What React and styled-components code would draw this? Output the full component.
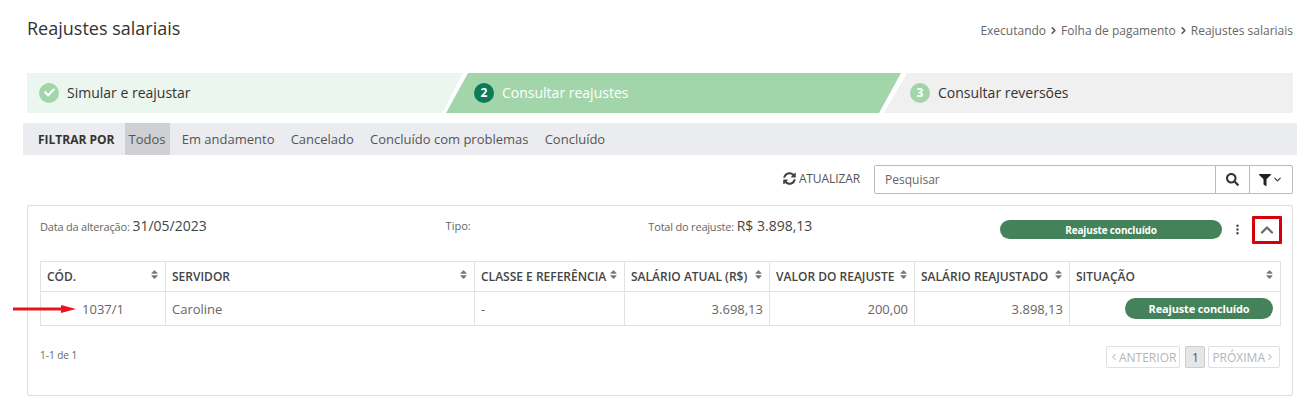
import React from "react";
import styled, { createGlobalStyle } from "styled-components";
import { FaCheck, FaFilter, FaSearch, FaSort, FaSyncAlt } from "react-icons/fa";
import { ChevronDown, ChevronLeft, ChevronRight, ChevronUp, EllipsisVertical } from "lucide-react";

const columns = [
  { label: "CÓD.", width: 125 },
  { label: "SERVIDOR", width: 309 },
  { label: "CLASSE E REFERÊNCIA", width: 150 },
  { label: "SALÁRIO ATUAL (R$)", width: 145 },
  { label: "VALOR DO REAJUSTE", width: 145 },
  { label: "SALÁRIO REAJUSTADO", width: 155 },
  { label: "SITUAÇÃO", width: 211 },
];

const filters = ["Todos", "Em andamento", "Cancelado", "Concluído com problemas", "Concluído"];

const App = () => {
  return (
    <Page>
      <GlobalStyle />
      <Header>
        <Title>Reajustes salariais</Title>
        <Breadcrumb>
          Executando
          <Sep size={11} strokeWidth={3.5} />
          Folha de pagamento
          <Sep size={11} strokeWidth={3.5} />
          Reajustes salariais
        </Breadcrumb>
      </Header>

      <Stepper>
        <StepFirst>
          <StepDone>
            <FaCheck size={11} />
          </StepDone>
          <StepLabel>Simular e reajustar</StepLabel>
        </StepFirst>
        <StepActive>
          <StepNumber $active>2</StepNumber>
          <StepLabel>Consultar reajustes</StepLabel>
        </StepActive>
        <StepLast>
          <StepNumber>3</StepNumber>
          <StepLabel>Consultar reversões</StepLabel>
        </StepLast>
      </Stepper>

      <FilterBar>
        <FilterLabel>FILTRAR POR</FilterLabel>
        {filters.map((f, i) => (
          <FilterItem key={f} $selected={i === 0}>
            {f}
          </FilterItem>
        ))}
      </FilterBar>

      <SearchRow>
        <RefreshButton>
          <FaSyncAlt size={13} color="#444" />
          ATUALIZAR
        </RefreshButton>
        <SearchGroup>
          <SearchInput placeholder="Pesquisar" />
          <SearchAddon>
            <FaSearch size={13} color="#333" />
          </SearchAddon>
          <SearchAddon $wide>
            <FaFilter size={12} color="#222" />
            <ChevronDown size={11} color="#333" strokeWidth={2.5} />
          </SearchAddon>
        </SearchGroup>
      </SearchRow>

      <Card>
        <CardHeader>
          <InfoDate>
            <span>Data da alteração:</span> <strong>31/05/2023</strong>
          </InfoDate>
          <InfoType>Tipo:</InfoType>
          <InfoTotal>
            <span>Total do reajuste:</span> <strong>R$ 3.898,13</strong>
          </InfoTotal>
          <HeaderActions>
            <StatusWide>Reajuste concluído</StatusWide>
            <MoreIcon size={13} color="#444" strokeWidth={2.5} />
            <CollapseButton>
              <ChevronUp size={20} color="#6b6b6b" strokeWidth={2.75} />
            </CollapseButton>
          </HeaderActions>
        </CardHeader>

        <Table>
          <colgroup>
            {columns.map((c) => (
              <col key={c.label} style={{ width: c.width }} />
            ))}
          </colgroup>
          <thead>
            <tr>
              {columns.map((c) => (
                <Th key={c.label}>
                  <ThInner>
                    {c.label}
                    <SortIcon size={11} />
                  </ThInner>
                </Th>
              ))}
            </tr>
          </thead>
          <tbody>
            <tr>
              <Td $center>
                <RowArrow width="64" height="10" viewBox="0 0 64 10">
                  <path d="M0 3.5h48V1l15 4-15 4V6.5H0z" fill="#e8141c" />
                </RowArrow>
                1037/1
              </Td>
              <Td>Caroline</Td>
              <Td>-</Td>
              <Td $right>3.698,13</Td>
              <Td $right>200,00</Td>
              <Td $right>3.898,13</Td>
              <Td $right>
                <StatusPill>Reajuste concluído</StatusPill>
              </Td>
            </tr>
          </tbody>
        </Table>

        <Footer>
          <Count>1-1 de 1</Count>
          <Pagination>
            <PageButton>
              <ChevronLeft size={10} strokeWidth={2.5} />
              ANTERIOR
            </PageButton>
            <PageCurrent>1</PageCurrent>
            <PageButton>
              PRÓXIMA
              <ChevronRight size={10} strokeWidth={2.5} />
            </PageButton>
          </Pagination>
        </Footer>
      </Card>
    </Page>
  );
};

const GlobalStyle = createGlobalStyle`
  html, body {
    margin: 0;
    padding: 0;
    background: #fff;
    font-family: "Open Sans", "Liberation Sans", sans-serif;
    color: #555;
  }
  * {
    box-sizing: border-box;
  }
`;

const Page = styled.div`
  width: 1311px;
  height: 404px;
  padding: 16px 18px 0 27px;
  overflow: hidden;
`;

const Header = styled.div`
  display: flex;
  justify-content: space-between;
  align-items: center;
  height: 24px;
  margin-bottom: 33px;
`;

const Title = styled.h1`
  margin: 0;
  font-size: 18px;
  font-weight: 400;
  color: #333;
`;

const Breadcrumb = styled.div`
  display: flex;
  align-items: center;
  gap: 2px;
  font-size: 12px;
  color: #666;
  margin-top: 5px;
  white-space: nowrap;
`;

const Sep = styled(ChevronRight)`
  color: #555;
`;

const Stepper = styled.div`
  display: flex;
  height: 40px;
  margin-bottom: 10px;
`;

const Step = styled.div`
  display: flex;
  align-items: center;
  gap: 8px;
  font-size: 14px;
  height: 100%;
`;

const StepLabel = styled.span`
  margin-top: -2px;
`;

const StepFirst = styled(Step)`
  width: 436px;
  padding-left: 12px;
  background: #ebf6ee;
  color: #333;
  clip-path: polygon(0 0, 100% 0, calc(100% - 21px) 100%, 0 100%);
`;

const StepActive = styled(Step)`
  width: 455px;
  margin-left: -17px;
  padding-left: 28px;
  background: #a3d5ab;
  color: #fff;
  clip-path: polygon(22px 0, 100% 0, calc(100% - 22px) 100%, 0 100%);
`;

const StepLast = styled(Step)`
  flex: 1;
  margin-left: -17px;
  padding-left: 26px;
  background: #f0f0f0;
  color: #333;
  clip-path: polygon(23px 0, 100% 0, 100% 100%, 0 100%);
`;

const StepDone = styled.span`
  display: flex;
  align-items: center;
  justify-content: center;
  width: 20px;
  height: 20px;
  margin-top: -1px;
  border-radius: 50%;
  background: #a3d5ab;
  color: #fff;
`;

const StepNumber = styled.span`
  display: flex;
  align-items: center;
  justify-content: center;
  width: 20px;
  height: 20px;
  margin-top: -1px;
  border-radius: 50%;
  font-size: 12px;
  font-weight: 700;
  color: #fff;
  background: ${({ $active }) => ($active ? "#0b7a55" : "#a3d5ab")};
`;

const FilterBar = styled.div`
  display: flex;
  align-items: stretch;
  height: 32px;
  margin: 0 -4px 10px;
  padding-left: 15px;
  background: #ebecf0;
  font-size: 13px;
`;

const FilterLabel = styled.span`
  display: flex;
  align-items: center;
  margin-right: 10px;
  font-size: 12px;
  font-weight: 700;
  color: #333;
`;

const FilterItem = styled.span`
  display: flex;
  align-items: center;
  padding: 0 ${({ $selected }) => ($selected ? "4px" : "8px")};
  margin-right: ${({ $selected }) => ($selected ? "4px" : "0")};
  margin-left: ${({ $selected }) => ($selected ? "0" : "0.2px")};
  color: #555;
  background: ${({ $selected }) => ($selected ? "#cfd0d4" : "transparent")};
`;

const SearchRow = styled.div`
  display: flex;
  justify-content: flex-end;
  align-items: center;
  gap: 14px;
  height: 29px;
  margin-bottom: 11px;
`;

const RefreshButton = styled.div`
  display: flex;
  align-items: center;
  gap: 3px;
  font-size: 12px;
  letter-spacing: -0.1px;
  color: #555;
  margin-top: -2px;
`;

const SearchGroup = styled.div`
  display: flex;
  width: 419px;
  height: 29px;
  border: 1px solid #bbb;
  border-radius: 2px;
`;

const SearchInput = styled.input`
  flex: 1;
  min-width: 0;
  border: 0;
  outline: 0;
  padding: 0 10px;
  font-family: inherit;
  font-size: 12px;
  color: #555;
  &::placeholder {
    color: #666;
    opacity: 1;
  }
`;

const SearchAddon = styled.div`
  display: flex;
  align-items: center;
  justify-content: center;
  gap: 1px;
  width: ${({ $wide }) => ($wide ? "43px" : "34px")};
  border-left: 1px solid #bbb;
`;

const Card = styled.div`
  height: 191px;
  padding: 0 12px;
  border: 1px solid #ddd;
  border-radius: 2px;
`;

const CardHeader = styled.div`
  display: flex;
  align-items: center;
  height: 55px;
  font-size: 11px;
  color: #666;
  span {
    letter-spacing: -0.2px;
  }
  strong {
    font-size: 14px;
    font-weight: 400;
    color: #444;
  }
`;

const InfoDate = styled.div`
  width: 406px;
  margin-bottom: 17px;
  white-space: nowrap;
`;

const InfoType = styled.div`
  width: 203px;
  margin-bottom: 17px;
`;

const InfoTotal = styled.div`
  width: 352px;
  margin-bottom: 17px;
  white-space: nowrap;
`;

const HeaderActions = styled.div`
  display: flex;
  align-items: center;
  margin-bottom: 8px;
`;

const StatusWide = styled.div`
  display: flex;
  align-items: center;
  justify-content: center;
  width: 222px;
  height: 19px;
  border-radius: 10px;
  background: #43825a;
  color: #fff;
  font-size: 10px;
  font-weight: 700;
  letter-spacing: -0.15px;
`;

const MoreIcon = styled(EllipsisVertical)`
  margin: 0 8px 0 9px;
`;

const CollapseButton = styled.div`
  display: flex;
  align-items: center;
  justify-content: center;
  width: 30px;
  height: 28px;
  border: 3px solid #d9000d;
  border-radius: 1px;
  margin-right: -2px;
`;

const Table = styled.table`
  width: 1240px;
  table-layout: fixed;
  border-collapse: collapse;
  font-size: 13px;
`;

const Th = styled.th`
  height: 30px;
  padding: 0 6px;
  border: 1px solid #e2e2e2;
  font-size: 12px;
  font-weight: 600;
  color: #444;
  text-align: left;
`;

const ThInner = styled.div`
  display: flex;
  justify-content: space-between;
  white-space: nowrap;
  align-items: center;
`;

const SortIcon = styled(FaSort)`
  flex: none;
  margin: -5px -1px 0 0;
  color: #777;
`;

const Td = styled.td`
  position: relative;
  height: 34px;
  padding: 0 6px;
  border: 1px solid #e2e2e2;
  color: #666;
  text-align: ${({ $right, $center }) => ($right ? "right" : $center ? "center" : "left")};
`;

const RowArrow = styled.svg`
  position: absolute;
  left: -28px;
  top: 12px;
`;

const StatusPill = styled.div`
  display: inline-flex;
  align-items: center;
  justify-content: center;
  width: 148px;
  height: 21px;
  margin-right: 1px;
  border-radius: 11px;
  background: #43825a;
  color: #fff;
  font-size: 11px;
  font-weight: 700;
  letter-spacing: -0.15px;
  vertical-align: middle;
`;

const Footer = styled.div`
  display: flex;
  justify-content: space-between;
  align-items: center;
  margin-top: 20px;
`;

const Count = styled.span`
  margin-top: -4px;
  font-size: 10px;
  color: #666;
`;

const Pagination = styled.div`
  display: flex;
  gap: 3px;
`;

const PageButton = styled.div`
  display: flex;
  align-items: center;
  height: 22px;
  padding: 0 4px 0 3px;
  border: 1px solid #e0e0e0;
  border-radius: 2px;
  font-size: 12px;
  color: #b5b5b5;
  &:first-child {
    margin-right: 2px;
    padding: 0 3px 0 2px;
  }
`;

const PageCurrent = styled.div`
  display: flex;
  align-items: center;
  justify-content: center;
  width: 20px;
  height: 22px;
  border: 1px solid #ccc;
  border-radius: 2px;
  background: #e6e6e6;
  font-size: 12px;
  color: #555;
`;

export default App;
